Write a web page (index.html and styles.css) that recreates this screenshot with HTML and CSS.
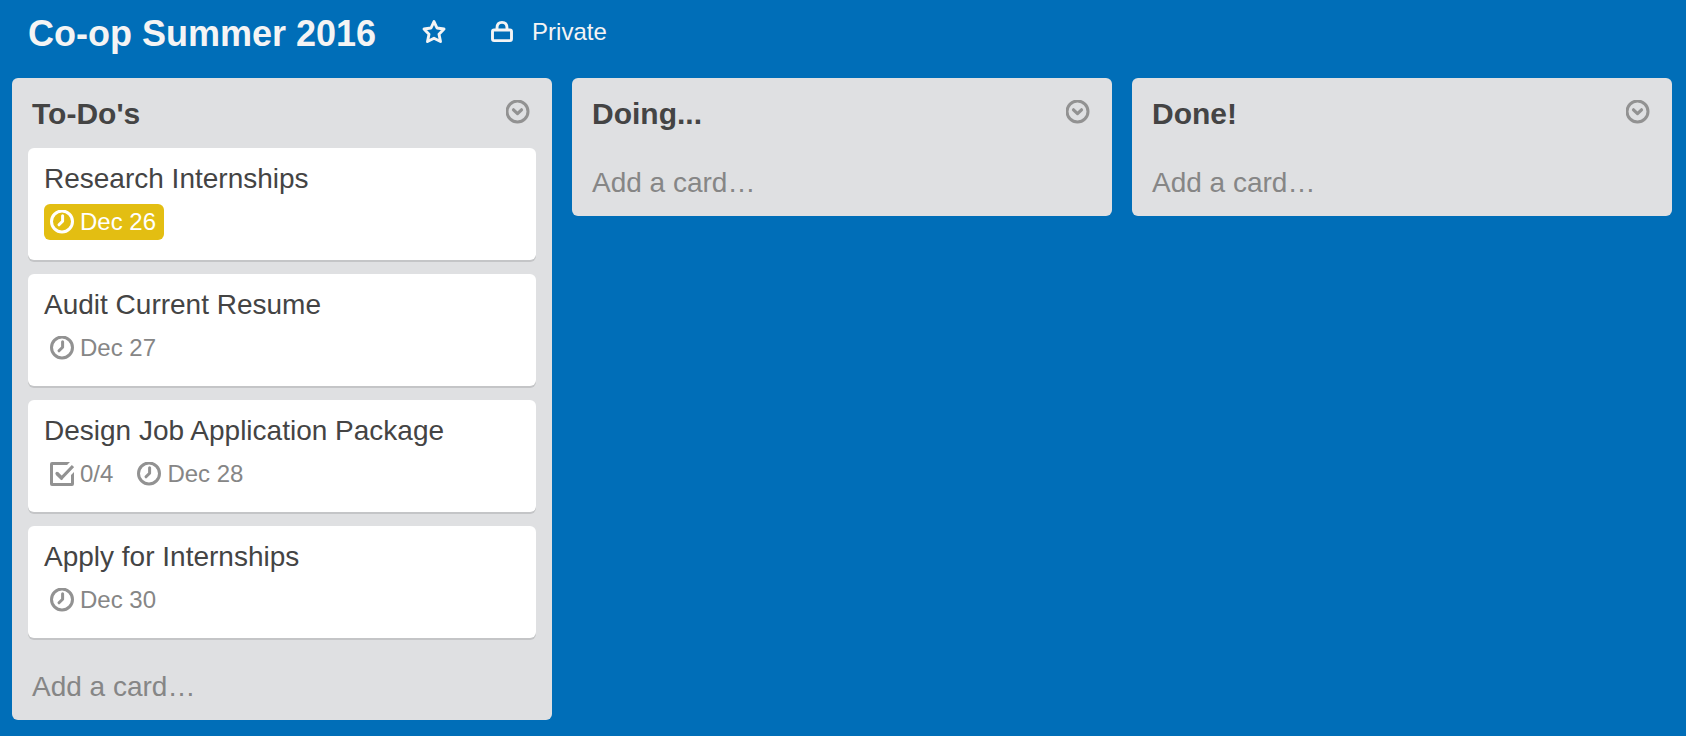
FILE: index.html
```html
<!DOCTYPE html>
<html lang="en">
<head>
<meta charset="utf-8">
<meta name="viewport" content="width=device-width, initial-scale=1">
<title>Co-op Summer 2016</title>
<link rel="stylesheet" href="styles.css">
</head>
<body>
<svg class="sprite" aria-hidden="true">
  <symbol id="clock" viewBox="0 0 24 24">
    <circle cx="12" cy="11.500" r="10.500" fill="none" stroke="currentColor" stroke-width="3"/>
    <path d="M12.600 5.800v5.400L9 14.800" fill="none" stroke="currentColor" stroke-width="3" stroke-linecap="round" stroke-linejoin="round"/>
  </symbol>
  <symbol id="check" viewBox="0 0 24 24">
    <path d="M0 2Q0 0 2 0H20L17 3H3V21H21V13L24 10V22Q24 24 22 24H2Q0 24 0 22Z" fill="currentColor"/>
    <path d="M7 11.500l4.500 4.500L23 4" fill="none" stroke="currentColor" stroke-width="3.200"/>
    <path d="M7 11.500l4.500 4.500" fill="none" stroke="currentColor" stroke-width="3.200" stroke-linecap="round"/>
  </symbol>
  <symbol id="menu" viewBox="0 0 24 24">
    <circle cx="11.500" cy="11.500" r="10.500" fill="none" stroke="currentColor" stroke-width="3"/>
    <path d="M7.500 9.800L11.500 13.600L15.500 9.800" fill="none" stroke="currentColor" stroke-width="3.200" stroke-linecap="round" stroke-linejoin="round"/>
  </symbol>
</svg>

<header class="board-header">
  <h1 class="board-title">Co-op Summer 2016</h1>
  <button class="board-button" type="button" aria-label="Star board">
    <svg class="icon" viewBox="0 0 24 24"><path d="M12 1.600L15 8L22 9L17 14.200L18.500 21.500L12 18.300L5.500 21.500L7 14.200L2 9L9 8Z" fill="none" stroke="currentColor" stroke-width="2.900" stroke-linejoin="round"/></svg>
  </button>
  <button class="board-button visibility" type="button">
    <svg class="icon" viewBox="0 0 24 24"><rect x="2.500" y="10" width="19" height="10.600" rx="1.600" fill="none" stroke="currentColor" stroke-width="2.900"/><path d="M7 10V8C7 4.500 9 2.400 12 2.400S17 4.500 17 8V10" fill="none" stroke="currentColor" stroke-width="2.900"/></svg>
    <span>Private</span>
  </button>
</header>

<main class="board">
  <section class="list">
    <header class="list-header">
      <h2 class="list-title">To-Do's</h2>
      <button class="list-menu" type="button" aria-label="To-Do's list actions"><svg class="icon"><use href="#menu"/></svg></button>
    </header>
    <div class="cards">
      <a class="card" href="#research">
        <span class="card-title">Research Internships</span>
        <span class="badges"><span class="badge due-soon"><svg class="icon"><use href="#clock"/></svg>Dec 26</span></span>
      </a>
      <a class="card" href="#audit">
        <span class="card-title">Audit Current Resume</span>
        <span class="badges"><span class="badge"><svg class="icon"><use href="#clock"/></svg>Dec 27</span></span>
      </a>
      <a class="card" href="#design">
        <span class="card-title">Design Job Application Package</span>
        <span class="badges"><span class="badge"><svg class="icon"><use href="#check"/></svg>0/4</span><span class="badge"><svg class="icon"><use href="#clock"/></svg>Dec 28</span></span>
      </a>
      <a class="card" href="#apply">
        <span class="card-title">Apply for Internships</span>
        <span class="badges"><span class="badge"><svg class="icon"><use href="#clock"/></svg>Dec 30</span></span>
      </a>
    </div>
    <button class="add-card" type="button">Add a card…</button>
  </section>

  <section class="list">
    <header class="list-header">
      <h2 class="list-title">Doing...</h2>
      <button class="list-menu" type="button" aria-label="Doing list actions"><svg class="icon"><use href="#menu"/></svg></button>
    </header>
    <div class="cards"></div>
    <button class="add-card" type="button">Add a card…</button>
  </section>

  <section class="list">
    <header class="list-header">
      <h2 class="list-title">Done!</h2>
      <button class="list-menu" type="button" aria-label="Done list actions"><svg class="icon"><use href="#menu"/></svg></button>
    </header>
    <div class="cards"></div>
    <button class="add-card" type="button">Add a card…</button>
  </section>
</main>
</body>
</html>
```
FILE: styles.css
```css
* {
  box-sizing: border-box;
}

body {
  margin: 0;
  min-height: 100vh;
  background: #006eb8;
  color: #444;
  font-family: "Liberation Sans", Arial, sans-serif;
  font-size: 28px;
  line-height: 36px;
}

button {
  margin: 0;
  padding: 0;
  border: 0;
  background: none;
  color: inherit;
  font: inherit;
  cursor: pointer;
}

.sprite {
  display: none;
}

.icon {
  display: block;
  flex: none;
  width: 24px;
  height: 24px;
  overflow: visible;
}

.board-header {
  display: flex;
  align-items: flex-start;
  padding: 12px 28px 24px;
  color: #f4f4f4;
}

.board-title {
  margin: 0;
  padding: 2px 2px 0 0;
  font-size: 36px;
  line-height: 40px;
}

.board-button {
  display: flex;
  align-items: center;
  gap: 18px;
  margin-left: 44px;
  font-size: 24px;
  line-height: 40px;
  height: 40px;
}

.board {
  display: grid;
  grid-template-columns: repeat(3, minmax(0, 1fr));
  align-items: start;
  gap: 20px;
  padding: 0 14px 16px 12px;
}

.list {
  padding: 18px 16px 15px;
  border-radius: 6px;
  background: #dfe0e2;
}

.list-header {
  display: flex;
  align-items: flex-start;
  justify-content: space-between;
  padding: 0 6px 16px 4px;
}

.list-title {
  margin: 0;
  font-size: 30px;
  line-height: 36px;
}

.list-menu {
  padding-top: 4px;
  color: #929292;
}

.cards {
  padding-bottom: 17px;
}

.card {
  display: block;
  margin-bottom: 14px;
  padding: 13px 16px 20px;
  border-radius: 6px;
  background: #fff;
  box-shadow: 0 2px 0 #c4c5c7;
  color: inherit;
  text-decoration: none;
}

.card-title {
  display: block;
}

.badges {
  display: flex;
  gap: 10px;
  padding-top: 7px;
}

.badge {
  display: flex;
  align-items: center;
  gap: 6px;
  padding: 0 8px 0 6px;
  border-radius: 6px;
  color: #868686;
  font-size: 24px;
}

.badge .icon {
  color: #929292;
}

.due-soon,
.due-soon .icon {
  color: #fff;
}

.due-soon {
  background: #e3be12;
}

.add-card {
  display: block;
  width: 100%;
  padding: 0 4px;
  color: #868686;
  text-align: left;
}
```
